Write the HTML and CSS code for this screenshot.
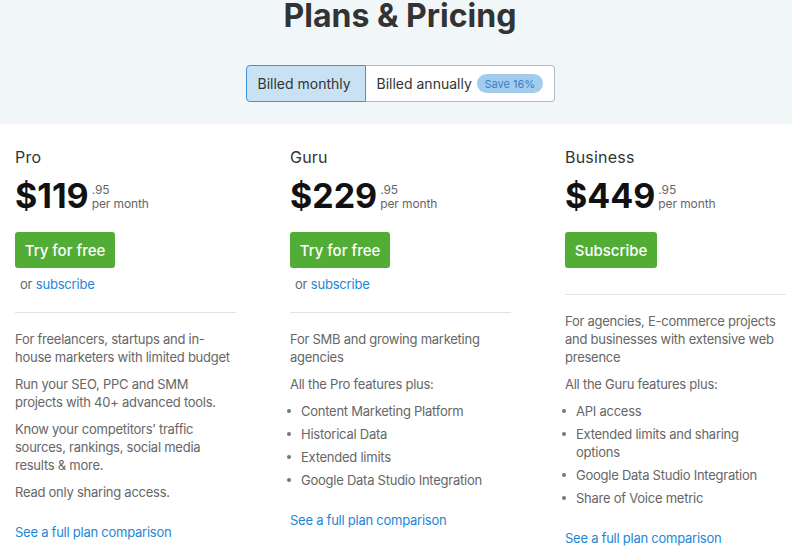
FILE: index.html
```html
<!DOCTYPE html>
<html lang="en">
<head>
<meta charset="utf-8">
<title>Plans &amp; Pricing</title>
<link rel="stylesheet" href="styles.css">
</head>
<body>
<div class="page">
  <header class="hero">
    <h1 class="title">Plans &amp; Pricing</h1>
    <div class="toggle">
      <button class="seg seg-active">Billed monthly</button>
      <button class="seg seg-annual">Billed annually <span class="badge">Save 16%</span></button>
    </div>
  </header>

  <main class="plans">
    <section class="plan">
      <h2 class="plan-name">Pro</h2>
      <div class="price"><span class="amount">$119</span><span class="price-meta"><span class="cents">.95</span><span class="per">per month</span></span></div>
      <a class="btn btn-wide">Try for free</a>
      <p class="alt">or <a class="link">subscribe</a></p>
      <hr class="sep">
      <p class="text">For freelancers, startups and in-house marketers with limited budget</p>
      <p class="text">Run your SEO, PPC and SMM projects with 40+ advanced tools.</p>
      <p class="text">Know your competitors’ traffic sources, rankings, social media results &amp; more.</p>
      <p class="text">Read only sharing access.</p>
      <a class="link compare">See a full plan comparison</a>
    </section>

    <section class="plan">
      <h2 class="plan-name">Guru</h2>
      <div class="price"><span class="amount">$229</span><span class="price-meta"><span class="cents">.95</span><span class="per">per month</span></span></div>
      <a class="btn btn-wide">Try for free</a>
      <p class="alt">or <a class="link">subscribe</a></p>
      <hr class="sep">
      <p class="text">For SMB and growing marketing agencies</p>
      <p class="text">All the Pro features plus:</p>
      <ul class="features">
        <li>Content Marketing Platform</li>
        <li>Historical Data</li>
        <li>Extended limits</li>
        <li>Google Data Studio Integration</li>
      </ul>
      <a class="link compare">See a full plan comparison</a>
    </section>

    <section class="plan">
      <h2 class="plan-name">Business</h2>
      <div class="price"><span class="amount">$449</span><span class="price-meta"><span class="cents">.95</span><span class="per">per month</span></span></div>
      <a class="btn btn-narrow">Subscribe</a>
      <hr class="sep">
      <p class="text">For agencies, E-commerce projects and businesses with extensive web presence</p>
      <p class="text">All the Guru features plus:</p>
      <ul class="features">
        <li>API access</li>
        <li>Extended limits and sharing options</li>
        <li>Google Data Studio Integration</li>
        <li>Share of Voice metric</li>
      </ul>
      <a class="link compare">See a full plan comparison</a>
    </section>
  </main>
</div>
</body>
</html>
```

FILE: styles.css
```css
html, body {
  margin: 0;
  padding: 0;
  overflow: hidden;
  background: #fff;
}

body {
  font-family: Inter, "Noto Sans", "Liberation Sans", sans-serif;
  color: #333;
}

.page {
  width: 800px;
}

.hero {
  height: 124px;
  background: #f1f6f8;
  display: flex;
  flex-direction: column;
  align-items: center;
  box-sizing: border-box;
}

.title {
  margin: -4px 0 0;
  font-size: 32px;
  line-height: 40px;
  font-weight: 700;
  color: #333;
  white-space: nowrap;
}

.toggle {
  margin-top: 29px;
  display: flex;
}

.seg {
  font-family: inherit;
  font-size: 14px;
  line-height: 20px;
  color: #333;
  height: 37px;
  padding: 0 0 0 11px;
  display: flex;
  align-items: center;
  box-sizing: border-box;
  cursor: pointer;
  white-space: nowrap;
}

.seg-active {
  width: 120px;
  background: #c8e2f3;
  border: 1px solid #3a95dd;
  border-radius: 4px 0 0 4px;
}

.seg-annual {
  width: 189px;
  background: #fff;
  border: 1px solid #b3b9be;
  border-left: none;
  border-radius: 0 4px 4px 0;
  gap: 5px;
}

.badge {
  display: inline-flex;
  align-items: center;
  justify-content: center;
  width: 66px;
  height: 19px;
  border-radius: 10px;
  background: #a2ccee;
  color: #3b7dc4;
  font-size: 11px;
}

.plans {
  display: grid;
  grid-template-columns: repeat(3, 221px);
  column-gap: 54px;
  padding: 21px 0 0 15px;
  align-items: start;
}

.plan {
  display: flex;
  flex-direction: column;
  align-items: flex-start;
}

.plan-name {
  margin: 0;
  font-size: 16px;
  line-height: 24px;
  font-weight: 400;
  color: #333;
  letter-spacing: 0.2px;
}

.price {
  margin-top: 7px;
  display: flex;
  align-items: flex-end;
}

.amount {
  font-size: 34px;
  line-height: 40px;
  font-weight: 700;
  color: #111;
}

.price-meta {
  display: flex;
  flex-direction: column;
  margin: 0 0 5px 3px;
  font-size: 12px;
  line-height: 14px;
  color: #666;
  letter-spacing: -0.1px;
}

.btn {
  margin-top: 16px;
  display: inline-flex;
  align-items: center;
  justify-content: center;
  height: 36px;
  padding: 0;
  box-sizing: border-box;
  background: #52ad36;
  color: #fff;
  font-size: 15px;
  font-weight: 500;
  border-radius: 3px;
  white-space: nowrap;
}

.btn-wide {
  width: 100px;
}

.btn-narrow {
  width: 92px;
}

.alt {
  margin: 7px 0 -7px;
  padding-left: 5px;
  font-size: 13px;
  line-height: 18px;
  color: #666;
  letter-spacing: -0.2px;
}

.link {
  color: #1d86d6;
  text-decoration: none;
}

.sep {
  align-self: stretch;
  margin: 26px 0 0;
  border: none;
  border-top: 1px solid #e2e2e2;
  height: 0;
}

.text {
  margin: 9px 0 0;
  font-size: 13px;
  line-height: 18px;
  color: #666;
  letter-spacing: -0.25px;
}

.sep + .text {
  margin-top: 17px;
}

.features {
  list-style: none;
  margin: 9px 0 0;
  padding: 0 6px 0 11px;
  font-size: 13px;
  line-height: 18px;
  color: #666;
  letter-spacing: -0.25px;
}

.features li {
  margin-top: 5px;
}

.features li:first-child {
  margin-top: 0;
}

.features li::before {
  content: "";
  display: inline-block;
  width: 4px;
  height: 4px;
  border-radius: 50%;
  background: #777;
  margin: 0 10px 0 -14px;
  vertical-align: middle;
  position: relative;
  top: -1px;
}

.compare {
  margin-top: 22px;
  font-size: 13px;
  line-height: 18px;
  letter-spacing: -0.25px;
}
```
